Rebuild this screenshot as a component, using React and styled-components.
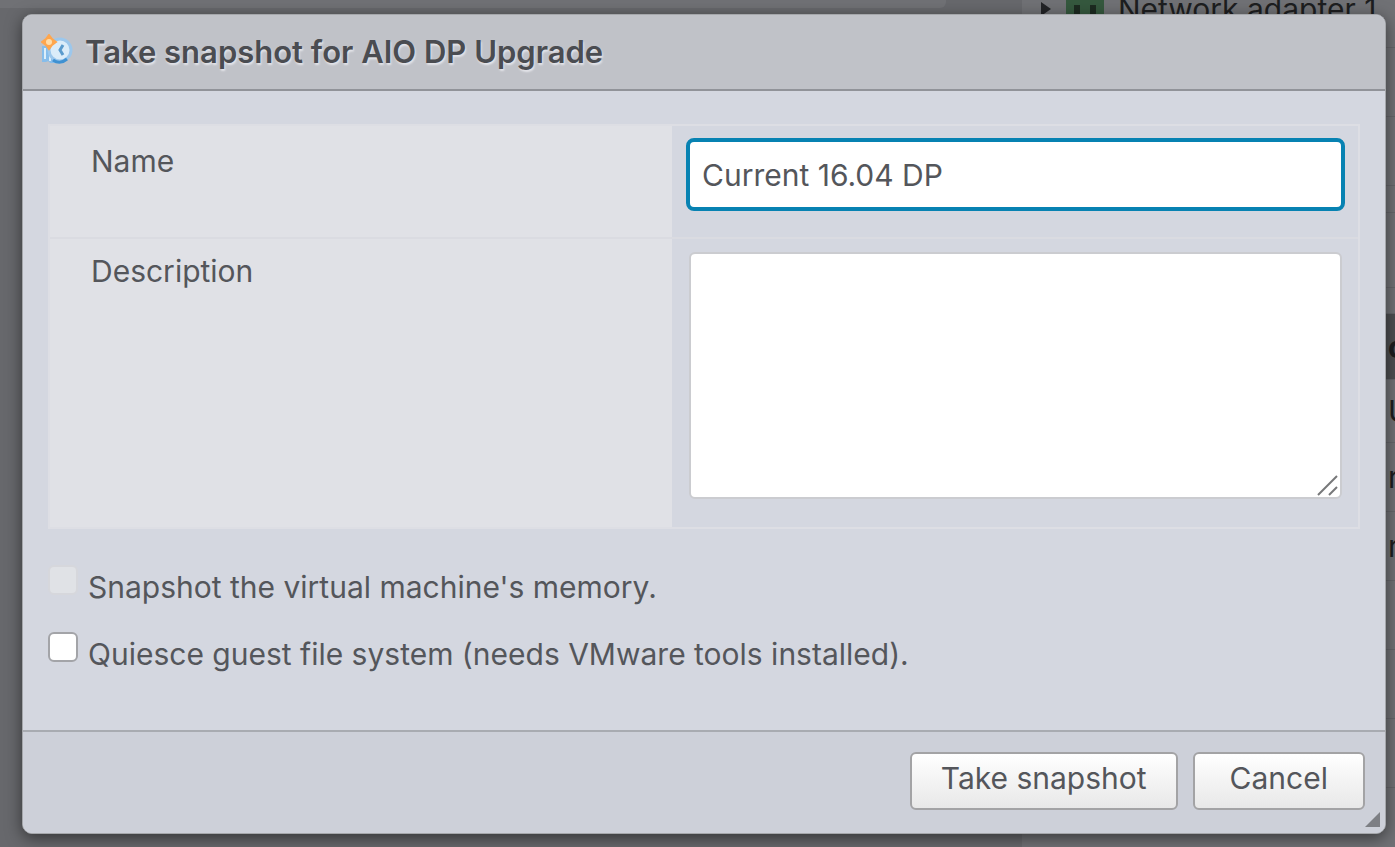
import React from "react";
import styled, { createGlobalStyle } from "styled-components";

const Global = createGlobalStyle`
  * { box-sizing: border-box; }
  body { margin: 0; background: #67686c; overflow: hidden; }
  body, input, textarea, button { font-family: Inter, "Open Sans", sans-serif; font-size: 30px; line-height: 36px; color: #54565b; }
`;

const Page = styled.div`
  position: relative;
  min-height: 100vh;
  padding: 14px 9px 13px 22px;
  display: flex;
`;

const Behind = styled.div`
  position: absolute;
  inset: 0;
  overflow: hidden;
  display: flex;
  gap: 76px;
  color: #1d1e20;
`;

const BehindMain = styled.div`
  flex: 1;
  height: 8px;
  background: #707175;
  border-bottom-right-radius: 6px;
`;

const BehindSide = styled.div`
  flex: 0 0 373px;
  min-width: 0;
  background: #707175;
  display: flex;
  flex-direction: column;
`;

const BehindItem = styled.div`
  flex: none;
  display: flex;
  align-items: center;
  gap: 14px;
  height: 48px;
  padding: 0 18px 29px;
  border-bottom: 1px solid #65666a;
  white-space: nowrap;
`;

const Adapter = styled.svg`
  flex: none;
`;

const BehindRow = styled.div`
  flex: none;
  height: ${(p) => p.$h || 69}px;
  padding-left: 366px;
  display: flex;
  align-items: center;
  white-space: nowrap;
  border-bottom: 1px solid #65666a;
  background: ${(p) => (p.$head ? "#4d4e51" : "transparent")};
  font-weight: ${(p) => (p.$head ? 700 : 400)};
`;

const Dialog = styled.form`
  position: relative;
  flex: 1;
  display: flex;
  flex-direction: column;
  background: #d4d7e0;
  border: 1px solid #a5a7ab;
  border-radius: 10px;
  box-shadow: 0 4px 16px rgba(0, 0, 0, 0.5);
  overflow: hidden;
`;

const Header = styled.header`
  display: flex;
  align-items: center;
  gap: 12px;
  height: 76px;
  padding: 0 18px;
  background: #c0c2c8;
  border-bottom: 2px solid #919399;
`;

const Title = styled.h1`
  margin: 0;
  font-size: 31px;
  font-weight: 600;
  line-height: 36px;
  color: #4a4c51;
  text-shadow: 1px 2px 2px #e4e5ea;
`;

const HeaderIcon = styled.svg`
  flex: none;
  margin-bottom: 4px;
`;

const Body = styled.div`
  flex: 1;
  padding: 33px 25px 0;
`;

const Fields = styled.div`
  border: 2px solid #dddee4;
`;

const Field = styled.div`
  display: grid;
  grid-template-columns: 622fr 686fr;
  & + & { border-top: 2px solid #dadbe1; }
`;

const FieldLabel = styled.label`
  padding: ${(p) => (p.$tall ? 14 : 17)}px 41px;
  background: #e0e1e6;
`;

const FieldCell = styled.div`
  display: flex;
  padding: ${(p) => (p.$tall ? "13px 16px 28px 17px" : "12px 13px 26px 14px")};
`;

const TextInput = styled.input`
  width: 100%;
  height: 73px;
  padding: 0 12px;
  border: 4px solid #0782b2;
  border-radius: 8px;
  background: #fff;
  outline: none;
`;

const TextArea = styled.textarea`
  display: block;
  width: 100%;
  height: 247px;
  padding: 12px;
  border: 2px solid #cbccd0;
  border-radius: 6px;
  background: #fff;
  outline: none;
  resize: none;
`;

const AreaWrap = styled.div`
  position: relative;
  flex: 1;
`;

const AreaGrip = styled.svg`
  position: absolute;
  right: 3px;
  bottom: 3px;
`;

const Options = styled.div`
  display: flex;
  flex-direction: column;
  gap: 27px;
  padding: 36px 0 0;
`;

const Option = styled.label`
  display: flex;
  align-items: flex-start;
  gap: 10px;
`;

const Tick = styled.input`
  appearance: none;
  flex: none;
  width: 30px;
  height: 30px;
  margin: 0;
  border: 2px solid #a3a4a8;
  border-radius: 6px;
  background: #fff;
  &:disabled { background: #e0e2e6; border-color: #d6d7dc; }
`;

const OptionText = styled.span`
  padding-top: 4px;
`;

const Footer = styled.footer`
  display: flex;
  justify-content: flex-end;
  gap: 15px;
  height: 103px;
  padding: 20px 20px;
  background: #cdd0d9;
  border-top: 2px solid #a8abb1;
`;

const Button = styled.button`
  height: 58px;
  padding: 0 ${(p) => p.$pad}px 6px;
  border: 2px solid #a3a3a5;
  border-radius: 6px;
  background: linear-gradient(#ffffff, #e8e8e8);
`;

const Grip = styled.svg`
  position: absolute;
  right: 5px;
  bottom: 6px;
`;

function SnapshotIcon() {
  return (
    <HeaderIcon width="32" height="32" viewBox="0 0 32 32" aria-hidden="true">
      <path d="M1 12H14V29H9Q8 26 5 28H1Z" fill="#86bdeb" />
      <path d="M4 14V25M9 15V27" stroke="#dceefa" strokeWidth="2" />
      <circle cx="19" cy="16" r="11" fill="#dbecf9" stroke="#9cc7ec" strokeWidth="3" />
      <path d="M12 26Q19 31 26 25" fill="none" stroke="#3f91d2" strokeWidth="3" />
      <path d="M22 11L19 16L22 21" fill="none" stroke="#5b9bcd" strokeWidth="3" />
      <path d="M8 1L11 5L15 8L11 11L8 15L5 11L1 8L5 5Z" fill="#ffa64d" stroke="#ffa64d" strokeWidth="2" />
      <circle cx="8" cy="8" r="3" fill="#ffdca8" />
    </HeaderIcon>
  );
}

export default function App() {
  return (
    <>
      <Global />
      <Page>
        <Behind aria-hidden="true">
          <BehindMain />
          <BehindSide>
            <BehindItem>
              <svg width="12" height="16" viewBox="0 0 12 16"><path d="M1 1L11 8L1 15Z" fill="#222326" /></svg>
              <Adapter width="38" height="24" viewBox="0 0 38 24">
                <path d="M0 0H38V24H0Z" fill="#35583e" />
                <path d="M8 8H14V18H8ZM24 8H30V18H24Z" fill="#1c2a20" />
              </Adapter>
              <span>Network adapter 1</span>
            </BehindItem>
            <BehindRow />
            <BehindRow />
            <BehindRow $h={27} />
            <BehindRow $h={75} />
            <BehindRow $h={26} />
            <BehindRow $h={66} $head>o</BehindRow>
            <BehindRow $h={63}>U</BehindRow>
            <BehindRow>r</BehindRow>
            <BehindRow>r</BehindRow>
            <BehindRow />
            <BehindRow />
            <BehindRow />
          </BehindSide>
        </Behind>
        <Dialog onSubmit={(e) => e.preventDefault()}>
          <Header>
            <SnapshotIcon />
            <Title>Take snapshot for AIO DP Upgrade</Title>
          </Header>
          <Body>
            <Fields>
              <Field>
                <FieldLabel htmlFor="name">Name</FieldLabel>
                <FieldCell>
                  <TextInput id="name" type="text" defaultValue="Current 16.04 DP" />
                </FieldCell>
              </Field>
              <Field>
                <FieldLabel htmlFor="description" $tall>Description</FieldLabel>
                <FieldCell $tall>
                  <AreaWrap>
                    <TextArea id="description" />
                    <AreaGrip width="22" height="22" viewBox="0 0 22 22" aria-hidden="true">
                      <path d="M1 21L20 2M12 21L20 13" stroke="#77787a" strokeWidth="2" />
                    </AreaGrip>
                  </AreaWrap>
                </FieldCell>
              </Field>
            </Fields>
            <Options>
              <Option>
                <Tick type="checkbox" disabled />
                <OptionText>Snapshot the virtual machine's memory.</OptionText>
              </Option>
              <Option>
                <Tick type="checkbox" />
                <OptionText>Quiesce guest file system (needs VMware tools installed).</OptionText>
              </Option>
            </Options>
          </Body>
          <Footer>
            <Button type="submit" $pad={29}>Take snapshot</Button>
            <Button type="button" $pad={35}>Cancel</Button>
          </Footer>
          <Grip width="15" height="15" viewBox="0 0 15 15" aria-hidden="true">
            <path d="M15 0V15H0Z" fill="#7d7f84" />
          </Grip>
        </Dialog>
      </Page>
    </>
  );
}
